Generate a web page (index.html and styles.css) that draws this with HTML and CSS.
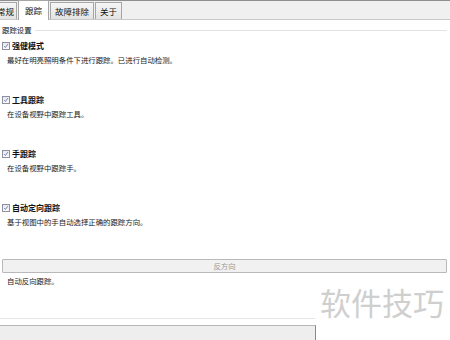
FILE: index.html
```html
<!DOCTYPE html>
<html lang="zh-CN">
<head>
    <meta charset="UTF-8">
    <title>跟踪设置</title>
    <link rel="stylesheet" href="styles.css">
</head>
<body>
    <div class="tabs">
        <div class="tab first">常规</div>
        <div class="tab active">跟踪</div>
        <div class="tab">故障排除</div>
        <div class="tab">关于</div>
    </div>
    <section class="group">
        <div class="group-title">跟踪设置</div>

        <div class="option first">
            <div class="check-row"><span class="checkbox"><svg viewBox="0 0 8 8"><path d="M1.6 4.2 L3.2 6 L6.4 1.6" /></svg></span><b>强健模式</b></div>
            <div class="desc">最好在明亮照明条件下进行跟踪。已进行自动检测。</div>
        </div>
        <div class="option">
            <div class="check-row"><span class="checkbox"><svg viewBox="0 0 8 8"><path d="M1.6 4.2 L3.2 6 L6.4 1.6" /></svg></span><b>工具跟踪</b></div>
            <div class="desc">在设备视野中跟踪工具。</div>
        </div>
        <div class="option">
            <div class="check-row"><span class="checkbox"><svg viewBox="0 0 8 8"><path d="M1.6 4.2 L3.2 6 L6.4 1.6" /></svg></span><b>手跟踪</b></div>
            <div class="desc">在设备视野中跟踪手。</div>
        </div>
        <div class="option">
            <div class="check-row"><span class="checkbox"><svg viewBox="0 0 8 8"><path d="M1.6 4.2 L3.2 6 L6.4 1.6" /></svg></span><b>自动定向跟踪</b></div>
            <div class="desc">基于视图中的手自动选择正确的跟踪方向。</div>
        </div>

        <button class="reverse" type="button" disabled>反方向</button>
        <div class="desc after">自动反向跟踪。</div>
    </section>
    <div class="footer-line"></div>
    <div class="footer-bar"></div>
    <div class="watermark">软件技巧</div>
</body>
</html>
```

FILE: styles.css
```css
body {
    margin: 0;
    padding: 0;
    background: #ffffff;
    color: #111;
    font-family: "Noto Sans CJK SC", "Liberation Sans", sans-serif;
    overflow: hidden;
    height: 340px;
}

/* tab strip */
.tabs {
    display: flex;
    align-items: flex-end;
    height: 20px;
    background: #f0f0f0;
    border-top: 1px solid #8f8f8f;
    border-bottom: 1px solid #c9c9c9;
    box-sizing: border-box;
}

.tab {
    height: 16px;
    line-height: 16px;
    padding: 0 4px;
    font-size: 8.5px;
    color: #111;
    border: 1px solid #a6a6a6;
    border-bottom: none;
    background: linear-gradient(#f6f6f6, #e3e3e3);
    margin-right: 1px;
}

.tab.first {
    margin-left: -9px;
    padding: 0 2px 0 5px;
}

.tab.active {
    height: 19px;
    line-height: 19px;
    background: #ffffff;
    margin-bottom: -1px;
    padding: 0 6px;
}

/* group */
.group {
    padding: 0 3px 0 2px;
}

.group-title {
    display: flex;
    align-items: center;
    gap: 3px;
    margin-top: 5px;
    height: 10px;
    font-size: 7.4px;
    line-height: 10px;
}

.group-title::after {
    content: "";
    flex: 1;
    border-top: 1px solid #e2e2e2;
}

.option {
    margin-top: 30px;
}

.option.first {
    margin-top: 6px;
}

.check-row {
    display: flex;
    align-items: center;
    gap: 2px;
    height: 10px;
    line-height: 10px;
    font-size: 8px;
}

.check-row b {
    font-weight: 700;
}

.checkbox {
    width: 8px;
    height: 8px;
    box-sizing: border-box;
    border: 1px solid #8e8f9f;
    background: linear-gradient(#e6e8ee, #fbfbfc);
    display: flex;
}

.checkbox svg {
    width: 6px;
    height: 6px;
    fill: none;
    stroke: #4a5f98;
    stroke-width: 1;
}

.desc {
    margin-top: 4px;
    padding-left: 5px;
    height: 10px;
    line-height: 10px;
    font-size: 7.4px;
    color: #1a1a1a;
}

.reverse {
    display: block;
    width: 100%;
    height: 14px;
    margin-top: 32px;
    padding: 0;
    border: 1px solid #b9b9b9;
    border-radius: 1px;
    background: #f1f1f1;
    color: #9a9a9a;
    font-family: "Noto Sans CJK SC", "Liberation Sans", sans-serif;
    font-size: 7.4px;
    line-height: 12px;
}

.desc.after {
    margin-top: 3px;
}

/* bottom */
.footer-line {
    width: 315px;
    margin-top: 32px;
    border-top: 1px solid #e6e6e6;
}

.footer-bar {
    width: 315px;
    height: 20px;
    margin-top: 6px;
    background: #eeeeee;
    border-top: 1px solid #b7b7b7;
    border-right: 1px solid #5f94b4;
}

.watermark {
    position: absolute;
    left: 320px;
    top: 284px;
    font-size: 31px;
    line-height: 36px;
    color: #cfcfcf;
    letter-spacing: 0;
}
```
